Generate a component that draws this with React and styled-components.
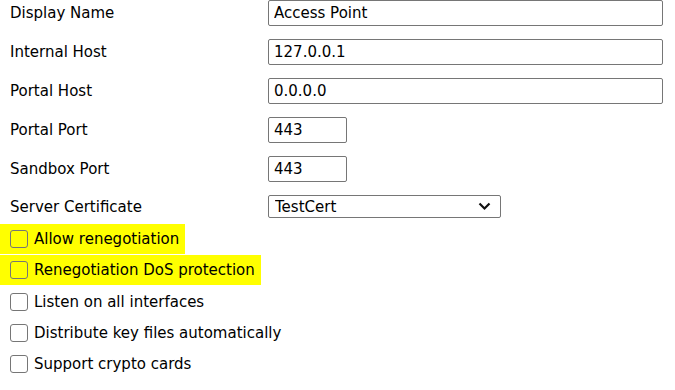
import { Fragment } from 'react';
import styled, { createGlobalStyle } from 'styled-components';

const GlobalStyle = createGlobalStyle`
  body {
    margin: 0;
    background: #fff;
    font-family: "DejaVu Sans", Verdana, sans-serif;
    font-size: 15px;
    color: #000;
  }
`;

const Page = styled.div`
  width: 675px;
  height: 390px;
  overflow: hidden;
`;

const Fields = styled.div`
  display: grid;
  grid-template-columns: 258px auto;
  row-gap: 13px;
  padding-left: 10px;
  align-items: center;
`;

const Label = styled.label`
  font-size: 15px;
  white-space: nowrap;
`;

const Input = styled.input`
  box-sizing: border-box;
  width: ${(p) => p.$width}px;
  height: 26px;
  padding: 0 5px;
  border: 1px solid #767676;
  border-radius: 2px;
  font-family: "DejaVu Sans", Verdana, sans-serif;
  font-size: 15px;
  color: #000;
  background: #fff;
  outline: none;
`;

const SelectWrap = styled.div`
  position: relative;
  width: 233px;
  height: 23px;
`;

const Select = styled.select`
  box-sizing: border-box;
  width: 100%;
  height: 100%;
  padding: 0 0 0 6px;
  border: 1px solid #767676;
  border-radius: 2px;
  appearance: none;
  font-family: "DejaVu Sans", Verdana, sans-serif;
  font-size: 15px;
  color: #000;
  background: #fff;
  outline: none;
`;

const Chevron = styled.svg`
  position: absolute;
  right: 10px;
  top: 7px;
  pointer-events: none;
`;

const Checks = styled.div`
  display: flex;
  flex-direction: column;
  margin-top: 6px;
`;

const CheckRow = styled.label`
  display: flex;
  align-items: center;
  gap: 6px;
  width: fit-content;
  height: ${(p) => (p.$marked ? 30 : 31)}px;
  margin-bottom: ${(p) => (p.$marked ? 1 : 0)}px;
  padding: 0 6px 0 10px;
  background: ${(p) => (p.$marked ? '#ffff00' : 'transparent')};
  font-size: 15px;
  white-space: nowrap;
`;

const Box = styled.input.attrs({ type: 'checkbox' })`
  appearance: none;
  box-sizing: border-box;
  width: 18px;
  height: 18px;
  margin: 0;
  border: 1px solid #767676;
  border-radius: 3px;
  background: transparent;
`;

const fields = [
  { label: 'Display Name', value: 'Access Point', width: 395 },
  { label: 'Internal Host', value: '127.0.0.1', width: 395 },
  { label: 'Portal Host', value: '0.0.0.0', width: 395 },
  { label: 'Portal Port', value: '443', width: 79 },
  { label: 'Sandbox Port', value: '443', width: 79 },
];

const checks = [
  { text: 'Allow renegotiation', marked: true },
  { text: 'Renegotiation DoS protection', marked: true },
  { text: 'Listen on all interfaces' },
  { text: 'Distribute key files automatically' },
  { text: 'Support crypto cards' },
];

export default function App() {
  return (
    <Page>
      <GlobalStyle />
      <Fields>
        {fields.map((f) => (
          <Fragment key={f.label}>
            <Label>{f.label}</Label>
            <Input $width={f.width} defaultValue={f.value} />
          </Fragment>
        ))}
        <Label>Server Certificate</Label>
        <SelectWrap>
          <Select defaultValue="TestCert">
            <option>TestCert</option>
          </Select>
          <Chevron width="13" height="9" viewBox="0 0 13 9">
            <path d="M1.5 1.5 L6.5 6.5 L11.5 1.5" fill="none" stroke="#111" strokeWidth="2.2" />
          </Chevron>
        </SelectWrap>
      </Fields>
      <Checks>
        {checks.map((c) => (
          <CheckRow key={c.text} $marked={c.marked}>
            <Box />
            {c.text}
          </CheckRow>
        ))}
      </Checks>
    </Page>
  );
}
